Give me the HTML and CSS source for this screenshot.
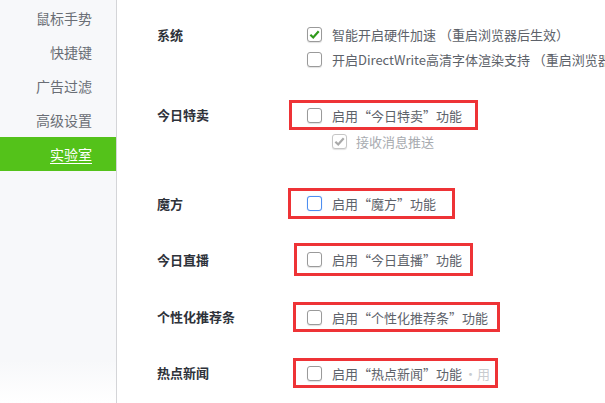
FILE: index.html
```html
<!DOCTYPE html>
<html lang="zh-CN">
<head>
    <meta charset="UTF-8">
    <title>设置 - 实验室</title>
    <link rel="stylesheet" href="styles.css">
</head>
<body>
    <div class="page">
        <aside class="sidebar">
            <a class="nav-item" href="#">鼠标手势</a>
            <a class="nav-item" href="#">快捷键</a>
            <a class="nav-item" href="#">广告过滤</a>
            <a class="nav-item" href="#">高级设置</a>
            <a class="nav-item active" href="#">实验室</a>
        </aside>

        <main class="content">
            <div class="row row-system">
                <div class="label">系统</div>
                <div class="opts">
                    <label class="opt">
                        <span class="box checked">
                            <svg viewBox="0 0 12 12" width="11" height="11"><path d="M1.5 6.2 L4.6 9.2 L10.6 2.4" fill="none" stroke="#2f9a1a" stroke-width="2.4"/></svg>
                        </span>
                        智能开启硬件加速 （重启浏览器后生效）
                    </label>
                    <label class="opt">
                        <span class="box"></span>
                        开启DirectWrite高清字体渲染支持 （重启浏览器后生效）
                    </label>
                </div>
            </div>

            <div class="row row-sale">
                <div class="label">今日特卖</div>
                <div class="opts">
                    <label class="opt mark mark-sale"><span class="box"></span>启用“今日特卖”功能</label>
                    <label class="opt sub disabled">
                        <span class="box checked">
                            <svg viewBox="0 0 12 12" width="11" height="11"><path d="M1.5 6.2 L4.6 9.2 L10.6 2.4" fill="none" stroke="#a9a9a9" stroke-width="2.4"/></svg>
                        </span>
                        接收消息推送
                    </label>
                </div>
            </div>

            <div class="row row-cube">
                <div class="label">魔方</div>
                <div class="opts">
                    <label class="opt mark mark-cube"><span class="box focus"></span>启用“魔方”功能</label>
                </div>
            </div>

            <div class="row row-live">
                <div class="label">今日直播</div>
                <div class="opts">
                    <label class="opt mark mark-live"><span class="box"></span>启用“今日直播”功能</label>
                </div>
            </div>

            <div class="row row-rec">
                <div class="label">个性化推荐条</div>
                <div class="opts">
                    <label class="opt mark mark-rec"><span class="box"></span>启用“个性化推荐条”功能</label>
                </div>
            </div>

            <div class="row row-news">
                <div class="label">热点新闻</div>
                <div class="opts">
                    <label class="opt mark mark-news"><span class="box"></span>启用“热点新闻”功能<span class="ghost">·用</span></label>
                </div>
            </div>
        </main>
    </div>
</body>
</html>
```

FILE: styles.css
```css
html, body {
    margin: 0;
    padding: 0;
    height: 100%;
    background: #fff;
    font-family: "Noto Sans CJK SC", "Noto Sans", sans-serif;
    overflow: hidden;
}

.page {
    display: flex;
    height: 403px;
}

/* left menu */
.sidebar {
    width: 116px;
    flex-shrink: 0;
    padding-top: 1px;
    background: linear-gradient(to bottom, #f7f8fa 0, #f7f8fa 360px, #ffffff 403px);
    border-right: 1px solid #d4d5d8;
    display: flex;
    flex-direction: column;
}

.nav-item {
    height: 34px;
    line-height: 34px;
    padding-right: 24px;
    text-align: right;
    font-size: 14px;
    color: #6a6e75;
    text-decoration: none;
}

.nav-item.active {
    background: #54c21a;
    color: #fff;
    text-decoration: underline;
    text-underline-offset: 3px;
}

/* settings */
.content {
    flex: 1;
    padding-left: 40px;
    overflow: hidden;
    white-space: nowrap;
}

.row {
    display: grid;
    grid-template-columns: 150px 1fr;
    align-items: start;
}

.label {
    font-size: 13px;
    font-weight: bold;
    color: #2e323a;
    line-height: 30px;
}

.opts {
    display: flex;
    flex-direction: column;
    align-items: flex-start;
}

.opt {
    display: flex;
    align-items: center;
    gap: 10px;
    font-size: 13px;
    color: #5d626a;
    height: 30px;
    box-sizing: border-box;
}

.box {
    width: 15px;
    height: 15px;
    box-sizing: border-box;
    border: 1px solid #9a9a9a;
    border-radius: 3px;
    background: #fff;
    box-shadow: 0 1px 1px rgba(0, 0, 0, 0.12);
    display: flex;
    align-items: center;
    justify-content: center;
    flex-shrink: 0;
}

.box.focus {
    border-color: #4d8ef0;
    box-shadow: 0 0 1px rgba(77, 142, 240, 0.6);
}

.row-system { margin-top: 22px; }
.row-system .label { line-height: 25px; }
.row-system .opt { height: 25px; }

.sub {
    height: 22px;
    margin-left: 25px;
    gap: 9px;
}

.disabled { color: #a8abb0; }
.disabled .box { border-color: #c6c6c6; }

/* red annotation frames */
.mark {
    border: 3px solid #ee3336;
}

.mark-sale { margin-left: -18px; padding-left: 15px; width: 189px; }
.mark-cube { margin-left: -19px; padding-left: 16px; width: 167px; height: 31px; }
.mark-live { margin-left: -13px; padding-left: 10px; width: 179px; height: 33px; }
.mark-rec { margin-left: -14px; padding-left: 11px; width: 207px; }
.mark-news { margin-left: -14px; padding-left: 11px; width: 205px; }

.row-sale { margin-top: 28px; }
.row-cube { margin-top: 36px; }
.row-cube .label { line-height: 31px; }
.row-live { margin-top: 24px; }
.row-live .label { line-height: 33px; }
.row-rec { margin-top: 26px; }
.row-news { margin-top: 26px; }

.ghost {
    margin-left: -8px;
    color: #c9ccd0;
}
```
